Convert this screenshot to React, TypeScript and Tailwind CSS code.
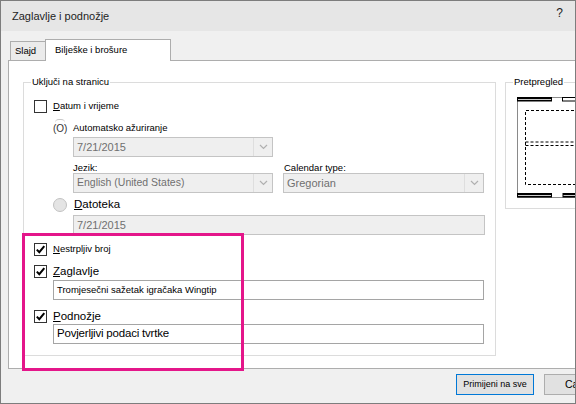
import React from 'react';

const Check = ({ checked }: { checked?: boolean }) => (
  <span className="w-[13px] h-[13px] shrink-0 border border-[#333333] bg-white flex items-center justify-center">
    {checked && (
      <svg width="11" height="11" viewBox="0 0 11 11">
        <path d="M1.8 5.6 L4.3 8.2 L9.3 2.2" fill="none" stroke="#000" strokeWidth="2" />
      </svg>
    )}
  </span>
);

const Chevron = () => (
  <span className="w-[19px] h-full flex items-center justify-center border-l border-[#dedede]">
    <svg width="9" height="6" viewBox="0 0 9 6">
      <path d="M1 1 L4.5 4.5 L8 1" fill="none" stroke="#b0b0b0" strokeWidth="1.2" />
    </svg>
  </span>
);

const Preview = () => (
  <svg width="62" height="102" viewBox="0 0 62 102">
    {/* page outline */}
    <path d="M62 0.5 H0.5 V100.5 H62" fill="none" stroke="#8a8a8a" strokeWidth="1" />
    {/* header bars */}
    <rect x="0" y="0" width="35" height="4.5" fill="#000" />
    <rect x="1" y="2" width="33" height="0.8" fill="#fff" />
    <rect x="45.5" y="0.5" width="20" height="3.5" fill="#fff" stroke="#000" strokeWidth="1" />
    {/* body dashed area */}
    <path d="M62 13.5 H8.5 V87.5 H62" fill="none" stroke="#000" strokeWidth="1" strokeDasharray="3 2" />
    <path d="M8.5 45 H62 M8.5 48.5 H62" fill="none" stroke="#000" strokeWidth="1" strokeDasharray="3 2" />
    {/* footer bars */}
    <rect x="0" y="96" width="35" height="4.5" fill="#000" />
    <rect x="1" y="98" width="33" height="0.8" fill="#fff" />
    <rect x="45.5" y="96" width="20" height="4.5" fill="#000" />
    <rect x="46.5" y="98" width="18" height="0.8" fill="#fff" />
  </svg>
);

export default function App() {
  return (
    <div className="relative w-[576px] h-[404px] overflow-hidden bg-[#f0f0f0] border border-[#7d7d7d] font-['Liberation_Sans',Arial,sans-serif] text-black">
      {/* Title bar */}
      <div className="h-[30px] bg-[#e6e6e6] flex items-center justify-between pl-[11px] pr-[12px]">
        <span className="text-[11px] text-[#1e1e1e]">Zaglavlje i podnožje</span>
        <span className="text-[12px] text-[#222] -mt-[6px]">?</span>
      </div>

      {/* Tabs */}
      <div className="h-[29px] flex items-end pl-[9px]">
        <div className="h-[19px] w-[36px] border border-b-0 border-[#adadad] bg-[#ebebeb] flex items-center pl-[4px] text-[9.5px]">
          Slajd
        </div>
        <div className="relative z-10 -mb-[1px] h-[22px] w-[126px] -ml-[1px] border border-b-0 border-[#adadad] bg-white flex items-center pl-[9px] text-[9.5px]">
          Bilješke i brošure
        </div>
      </div>

      {/* Panel */}
      <div className="ml-[7px] w-[620px] h-[309px] border border-[#adadad] bg-white flex pt-[21px] pl-[14px]">
        {/* Include group */}
        <div className="relative shrink-0 w-[473px] h-[274px] border border-[#dcdcdc]">
          <span className="absolute -top-[7px] left-[7px] bg-white px-[1px] text-[9.5px] leading-[12px]">
            Uključi na stranicu
          </span>

          <div className="mt-[17px] h-[13px] pl-[10px] flex items-center">
            <Check />
            <span className="ml-[6px] text-[9.5px]">
              <span className="underline">D</span>atum i vrijeme
            </span>
          </div>

          <div className="mt-[8px] h-[14px] pl-[29px] flex items-center">
            <span className="relative w-[20px] text-[10px] text-[#333]">
              <span className="absolute -top-[2px] left-[2px] w-[10px] h-[4px] border-t border-[#c8c8c8] rounded-t-full"></span>
              (O)
            </span>
            <span className="text-[9.5px]">Automatsko ažuriranje</span>
          </div>

          <div className="mt-[2px] ml-[49px] w-[200px] h-[20px] border border-[#c4c4c4] bg-[#efefef] flex items-center">
            <span className="flex-1 pl-[3px] text-[11px] text-[#707070]">7/21/2015</span>
            <Chevron />
          </div>

          <div className="mt-[5px] ml-[49px] h-[11px] flex text-[9.5px] leading-[11px]">
            <span className="w-[211px]">Jezik:</span>
            <span>Calendar type:</span>
          </div>

          <div className="ml-[49px] flex gap-[10px]">
            <div className="w-[200px] h-[20px] border border-[#c4c4c4] bg-[#efefef] flex items-center">
              <span className="flex-1 pl-[3px] text-[10.5px] text-[#707070]">English (United States)</span>
              <Chevron />
            </div>
            <div className="w-[201px] h-[20px] border border-[#c4c4c4] bg-[#efefef] flex items-center">
              <span className="flex-1 pl-[3px] text-[11px] text-[#707070]">Gregorian</span>
              <Chevron />
            </div>
          </div>

          <div className="mt-[5px] h-[14px] pl-[29px] flex items-center">
            <span className="w-[14px] h-[14px] rounded-full border border-[#c2c2c2] bg-[#e4e4e4]"></span>
            <span className="ml-[7px] text-[11.5px]">
              <span className="underline">D</span>atoteka
            </span>
          </div>

          <div className="mt-[3px] ml-[49px] w-[412px] h-[20px] border border-[#c4c4c4] bg-[#efefef] flex items-center pl-[3px] text-[11px] text-[#707070]">
            7/21/2015
          </div>

          <div className="mt-[8px] h-[13px] pl-[10px] flex items-center">
            <Check checked />
            <span className="ml-[6px] text-[9.5px]">
              <span className="underline">N</span>estrpljiv broj
            </span>
          </div>

          <div className="mt-[9px] h-[13px] pl-[10px] flex items-center">
            <Check checked />
            <span className="ml-[6px] text-[11.5px]">
              <span className="underline">Z</span>aglavlje
            </span>
          </div>

          <div className="mt-[2px] ml-[29px] w-[431px] h-[20px] border border-[#a5a5a5] bg-white flex items-center pl-[3px] text-[9.5px]">
            Tromjesečni sažetak igračaka Wingtip
          </div>

          <div className="mt-[10px] h-[13px] pl-[10px] flex items-center">
            <Check checked />
            <span className="ml-[6px] text-[11.5px]">
              <span className="underline">P</span>odnožje
            </span>
          </div>

          <div className="mt-[1px] ml-[29px] w-[431px] h-[20px] border border-[#a5a5a5] bg-white flex items-center pl-[3px] text-[11.5px] tracking-[-0.2px]">
            Povjerljivi podaci tvrtke
          </div>
        </div>

        {/* Preview group */}
        <div className="relative shrink-0 ml-[9px] w-[140px] h-[127px] border border-[#dcdcdc] pt-[14px] pl-[11px]">
          <span className="absolute -top-[7px] left-[7px] bg-white px-[1px] text-[9.5px] leading-[12px]">
            Pretpregled
          </span>
          <Preview />
        </div>
      </div>

      {/* Footer buttons */}
      <div className="w-[700px] flex pl-[455px] pt-[5px]">
        <button className="shrink-0 w-[78px] h-[21px] border border-[#0078d7] bg-[#e1e1e1] text-[9px] whitespace-nowrap flex items-center justify-center">
          Primijeni na sve
        </button>
        <button className="shrink-0 ml-[10px] w-[78px] h-[21px] border border-[#adadad] bg-[#e1e1e1] text-[10.5px] whitespace-nowrap text-left pl-[20px]">
          Cancel
        </button>
      </div>

      {/* Highlight annotation */}
      <div className="absolute left-[21px] top-[232px] w-[222px] h-[138px] border-[3px] border-[#e4168a]"></div>
    </div>
  );
}
